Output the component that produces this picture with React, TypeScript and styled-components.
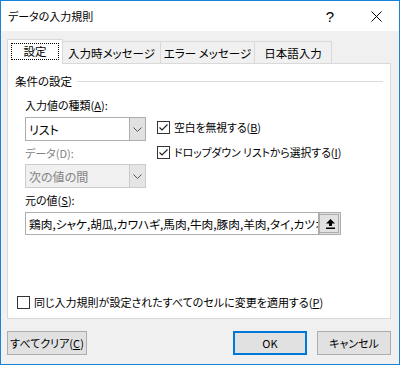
import styled, { createGlobalStyle } from 'styled-components';

const GlobalStyle = createGlobalStyle`
  html, body {
    margin: 0;
    padding: 0;
  }
  body {
    font-family: "Noto Sans CJK JP", "Noto Sans", sans-serif;
    font-size: 11px;
    color: #000;
    font-feature-settings: "palt";
  }
  u {
    text-underline-offset: 1px;
  }
`;

const tabs = [
  { label: '設定', width: 56 },
  { label: '入力時メッセージ', width: 99 },
  { label: 'エラー メッセージ', width: 95 },
  { label: '日本語入力', width: 78 },
];

const sourceItems = '鶏肉,シャケ,胡瓜,カワハギ,馬肉,牛肉,豚肉,羊肉,タイ,カツオ,マグロ,ブリ';

function Chevron() {
  return (
    <svg width="9" height="5" viewBox="0 0 9 5">
      <path d="M0.5 0.5 L4.5 4.5 L8.5 0.5" fill="none" stroke="#555" strokeWidth="1" />
    </svg>
  );
}

function CheckBox({ checked }: { checked?: boolean }) {
  return (
    <BoxStyle>
      {checked && (
        <svg width="11" height="11" viewBox="0 0 11 11">
          <path d="M1.5 5.5 L4 8 L9.5 2.5" fill="none" stroke="#222" strokeWidth="1.2" />
        </svg>
      )}
    </BoxStyle>
  );
}

function App() {
  return (
    <>
      <GlobalStyle />
      <WindowStyle>
        <TitleBar>
          <Title>データの入力規則</Title>
          <TitleButton>?</TitleButton>
          <TitleButton>
            <svg width="11" height="11" viewBox="0 0 11 11">
              <path d="M0.5 0.5 L10.5 10.5 M10.5 0.5 L0.5 10.5" stroke="#000" strokeWidth="1" />
            </svg>
          </TitleButton>
        </TitleBar>
        <Body>
          <TabRow>
            {tabs.map((tab, i) => (
              <Tab key={tab.label} $active={i === 0} $width={tab.width}>
                {i === 0 ? <Focus>{tab.label}</Focus> : tab.label}
              </Tab>
            ))}
          </TabRow>
          <Panel>
            <GroupHeader>
              <span>条件の設定</span>
              <Rule />
            </GroupHeader>
            <Content>
              <Label>
                入力値の種類(<u>A</u>):
              </Label>
              <Columns>
                <LeftCol>
                  <Select>
                    <SelectText>リスト</SelectText>
                    <DropButton>
                      <Chevron />
                    </DropButton>
                  </Select>
                  <Label $disabled $gap={4}>
                    データ(D):
                  </Label>
                  <Select $disabled $gap={3}>
                    <SelectText>次の値の間</SelectText>
                    <DropButton $disabled>
                      <Chevron />
                    </DropButton>
                  </Select>
                </LeftCol>
                <RightCol>
                  <CheckRow>
                    <CheckBox checked />
                    <span>
                      空白を無視する(<u>B</u>)
                    </span>
                  </CheckRow>
                  <CheckRow>
                    <CheckBox checked />
                    <span>
                      ドロップダウン リストから選択する(<u>I</u>)
                    </span>
                  </CheckRow>
                </RightCol>
              </Columns>
              <Label $gap={4}>
                元の値(<u>S</u>):
              </Label>
              <SourceField>
                <SourceText>{sourceItems}</SourceText>
                <PickButton>
                  <svg width="9" height="10" viewBox="0 0 9 10">
                    <path d="M4.5 0 L9 4.5 L6 4.5 L6 7 L3 7 L3 4.5 L0 4.5 Z" fill="#000" />
                    <rect x="0" y="8.5" width="9" height="1.5" fill="#000" />
                  </svg>
                </PickButton>
              </SourceField>
            </Content>
            <BottomCheck>
              <CheckBox />
              <span>
                同じ入力規則が設定されたすべてのセルに変更を適用する(<u>P</u>)
              </span>
            </BottomCheck>
          </Panel>
          <ButtonRow>
            <Button $width={80}>
              すべてクリア(<u>C</u>)
            </Button>
            <Spacer />
            <Button $width={74} $primary>
              OK
            </Button>
            <Button $width={74}>キャンセル</Button>
          </ButtonRow>
        </Body>
      </WindowStyle>
    </>
  );
}

export default App;

const WindowStyle = styled.div`
  width: 400px;
  height: 365px;
  box-sizing: border-box;
  border: 1px solid #1883d7;
  background: #f0f0f0;
  display: flex;
  flex-direction: column;
  overflow: hidden;
`;

const TitleBar = styled.div`
  height: 30px;
  flex-shrink: 0;
  background: #fff;
  display: flex;
  align-items: center;
  padding-left: 7px;
`;

const Title = styled.div`
  flex: 1;
  font-size: 11px;
`;

const TitleButton = styled.div`
  width: 46px;
  height: 30px;
  display: flex;
  align-items: center;
  justify-content: center;
  font-family: "Liberation Sans", sans-serif;
  font-size: 15px;
`;

const Body = styled.div`
  flex: 1;
  display: flex;
  flex-direction: column;
  padding: 8px 8px 0 6px;
`;

const TabRow = styled.div`
  height: 24px;
  display: flex;
  align-items: flex-end;
  position: relative;
  z-index: 1;
`;

const Tab = styled.div<{ $active?: boolean; $width: number }>`
  width: ${(p) => p.$width}px;
  box-sizing: border-box;
  height: ${(p) => (p.$active ? 25 : 22)}px;
  margin-bottom: ${(p) => (p.$active ? -1 : 0)}px;
  margin-left: -1px;
  &:first-child {
    margin-left: 0;
  }
  border: 1px solid #d9d9d9;
  border-bottom: none;
  background: ${(p) => (p.$active ? '#fff' : '#f0f0f0')};
  display: flex;
  align-items: center;
  justify-content: center;
  padding-bottom: ${(p) => (p.$active ? 2 : 0)}px;
  white-space: nowrap;
  font-size: 11.5px;
`;

const Focus = styled.span`
  display: flex;
  align-items: center;
  justify-content: center;
  width: 48px;
  height: 17px;
  border: 1px dotted #000;
  box-sizing: border-box;
`;

const Panel = styled.div`
  width: 384px;
  height: 256px;
  box-sizing: border-box;
  border: 1px solid #d9d9d9;
  background: #fff;
  display: flex;
  flex-direction: column;
`;

const GroupHeader = styled.div`
  display: flex;
  align-items: center;
  gap: 5px;
  padding: 9px 7px 0 7px;
  line-height: 16px;
  font-size: 11.5px;
`;

const Rule = styled.div`
  flex: 1;
  height: 1px;
  background: #dcdcdc;
`;

const Content = styled.div`
  display: flex;
  flex-direction: column;
  padding: 8px 0 0 17px;
`;

const Label = styled.div<{ $disabled?: boolean; $gap?: number }>`
  line-height: 16px;
  margin-top: ${(p) => p.$gap ?? 0}px;
  color: ${(p) => (p.$disabled ? '#838383' : '#000')};
`;

const Columns = styled.div`
  display: flex;
  gap: 11px;
  margin-top: 4px;
`;

const LeftCol = styled.div`
  width: 121px;
  display: flex;
  flex-direction: column;
`;

const RightCol = styled.div`
  display: flex;
  flex-direction: column;
  gap: 9px;
  padding-top: 2px;
`;

const Select = styled.div<{ $disabled?: boolean; $gap?: number }>`
  height: 24px;
  margin-top: ${(p) => p.$gap ?? 0}px;
  box-sizing: border-box;
  border: 1px solid ${(p) => (p.$disabled ? '#cccccc' : '#adadad')};
  background: ${(p) => (p.$disabled ? '#f0f0f0' : '#fff')};
  color: ${(p) => (p.$disabled ? '#838383' : '#000')};
  display: flex;
  align-items: stretch;
  font-size: 12px;
`;

const SelectText = styled.div`
  flex: 1;
  display: flex;
  align-items: center;
  padding-left: 3px;
`;

const DropButton = styled.div<{ $disabled?: boolean }>`
  width: 16px;
  box-sizing: border-box;
  border-left: 1px solid ${(p) => (p.$disabled ? '#cccccc' : '#adadad')};
  background: ${(p) => (p.$disabled ? '#e5e5e5' : '#e1e1e1')};
  display: flex;
  align-items: center;
  justify-content: center;
`;

const CheckRow = styled.div`
  display: flex;
  align-items: center;
  gap: 4px;
  line-height: 16px;
  font-size: 10.8px;
`;

const BoxStyle = styled.div`
  width: 13px;
  height: 13px;
  box-sizing: border-box;
  border: 1px solid #333;
  background: #fff;
  display: flex;
  align-items: center;
  justify-content: center;
  flex-shrink: 0;
`;

const SourceField = styled.div`
  width: 316px;
  height: 23px;
  margin-top: 4px;
  box-sizing: border-box;
  border: 1px solid #adadad;
  display: flex;
`;

const SourceText = styled.div`
  flex: 1;
  overflow: hidden;
  white-space: nowrap;
  display: flex;
  align-items: center;
  padding-left: 3px;
  font-size: 11.7px;
`;

const PickButton = styled.div`
  width: 22px;
  box-sizing: border-box;
  border-left: 2px solid #adadad;
  background: #e1e1e1;
  display: flex;
  align-items: center;
  justify-content: center;
  outline: 1px solid #adadad;
  outline-offset: -2px;
`;

const BottomCheck = styled.div`
  margin-top: auto;
  padding: 0 0 8px 9px;
  display: flex;
  align-items: center;
  gap: 4px;
  line-height: 16px;
`;

const ButtonRow = styled.div`
  display: flex;
  gap: 10px;
  margin-top: 12px;
`;

const Spacer = styled.div`
  flex: 1;
`;

const Button = styled.div<{ $width: number; $primary?: boolean }>`
  width: ${(p) => p.$width}px;
  height: 24px;
  box-sizing: border-box;
  border: ${(p) => (p.$primary ? '2px solid #0078d7' : '1px solid #adadad')};
  background: #e1e1e1;
  display: flex;
  align-items: center;
  justify-content: center;
  white-space: nowrap;
`;
